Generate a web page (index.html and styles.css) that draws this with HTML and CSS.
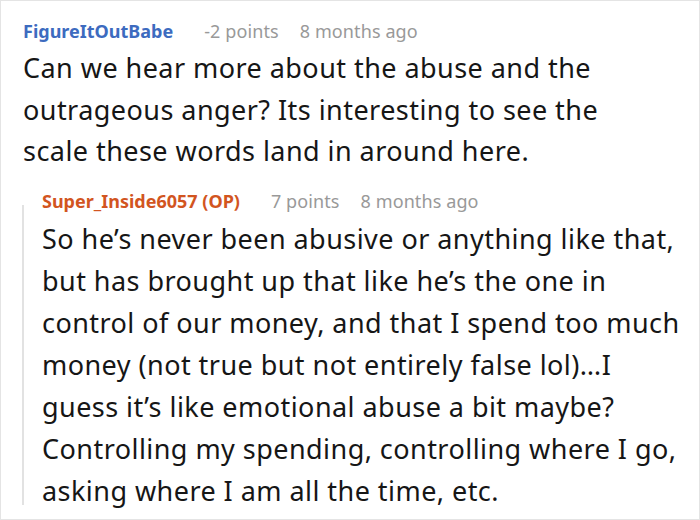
FILE: index.html
```html
<!DOCTYPE html>
<html>
<head>
<meta charset="utf-8">
<link rel="stylesheet" href="styles.css">
</head>
<body>
<div class="frame">
  <div class="comment">
    <div class="meta">
      <span class="author blue">FigureItOutBabe</span>
      <span class="info">-2 points</span>
      <span class="info">8 months ago</span>
    </div>
    <p class="text">Can we hear more about the abuse and the outrageous anger? Its interesting to see the scale these words land in around here.</p>
    <div class="reply">
      <div class="thread"></div>
      <div class="reply-body">
        <div class="meta">
          <span class="author orange">Super_Inside6057 (OP)</span>
          <span class="info">7 points</span>
          <span class="info">8 months ago</span>
        </div>
        <p class="text reply-text">So he’s never been abusive or anything like that, but has brought up that like he’s the one in control of our money, and that I spend too much money (not true but not entirely false lol)…I guess it’s like emotional abuse a bit maybe? Controlling my spending, controlling where I go, asking where I am all the time, etc.</p>
      </div>
    </div>
  </div>
</div>
</body>
</html>
```
FILE: styles.css
```css
html, body {
  margin: 0;
  padding: 0;
  background: #fff;
}
.frame {
  box-sizing: border-box;
  width: 700px;
  height: 520px;
  border: 1px solid #e4e4e4;
  overflow: hidden;
  font-family: "Noto Sans", sans-serif;
}
.comment {
  padding: 18px 0 0 22px;
}
.meta {
  display: flex;
  align-items: baseline;
  height: 24px;
  line-height: 24px;
}
.author {
  font-weight: 700;
  font-size: 18px;
  margin-right: 31px;
}
.blue { color: #3d6bbf; }
.orange { color: #d2551f; }
.info {
  color: #999;
  font-size: 18px;
  letter-spacing: 0.1px;
  margin-right: 21px;
}
.text {
  margin: 4px 0 0 0;
  font-size: 27px;
  letter-spacing: 0.45px;
  line-height: 41.5px;
  color: #161616;
  width: 620px;
}
.reply {
  display: flex;
  margin-top: 17px;
}
.thread {
  flex: none;
  width: 2px;
  margin: 16px 0 7px -1px;
  background: #e2e2e2;
}
.reply-body {
  flex: none;
  padding-left: 18px;
}
.reply-text {
  margin-top: 5px;
  width: 642px;
  line-height: 42px;
}
```
